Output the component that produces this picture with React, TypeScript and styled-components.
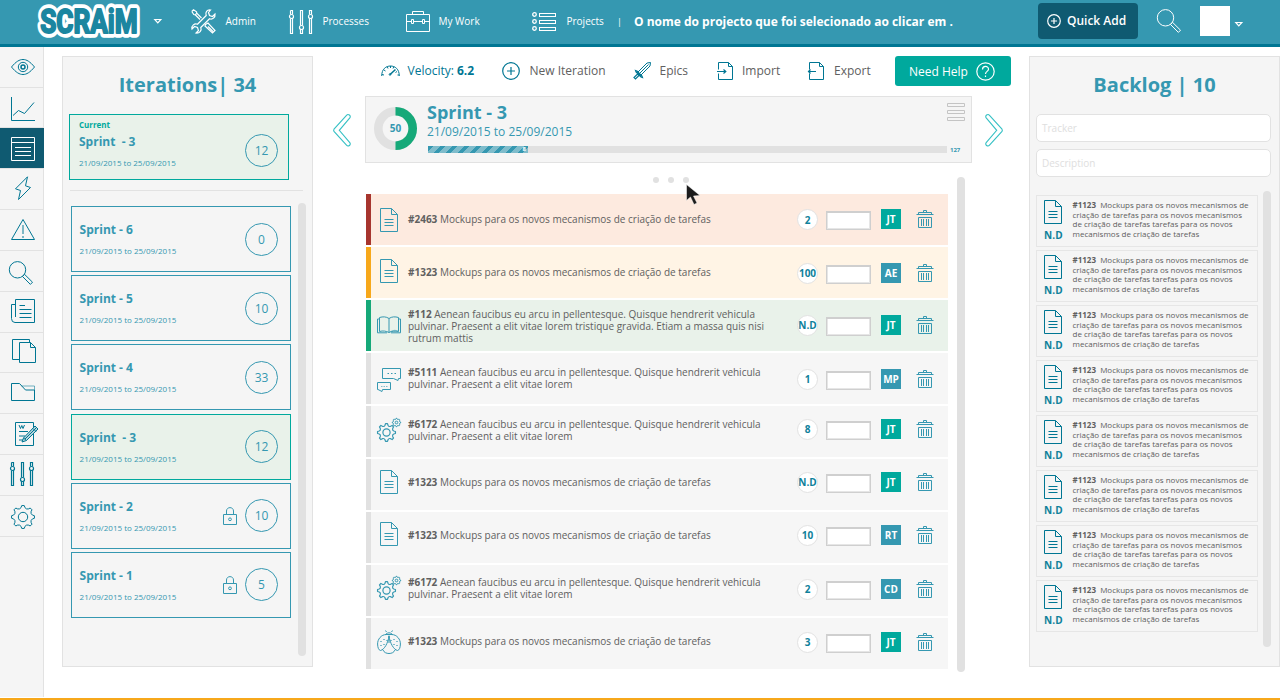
import React from "react";
import styled, { createGlobalStyle } from "styled-components";

const c = {
  blue: "#3598b1",
  deep: "#007693",
  navy: "#0f5a71",
  teal: "#00a99d",
  green: "#16a979",
  mint: "#e9f2ea",
  panel: "#f5f5f5",
  line: "#e2e2e2",
  text: "#606060",
  orange: "#f7a81b",
};

const Global = createGlobalStyle`
  *, *::before, *::after { box-sizing: border-box; }
  html, body { margin: 0; padding: 0; background: #fff; }
  body { font-family: "Open Sans", "Liberation Sans", sans-serif; overflow: hidden; }
  svg { display: block; flex: none; }
`;

/* ---------- icons ---------- */

type IconProps = { w?: number; h?: number; color?: string; sw?: number; children?: React.ReactNode };

const Icon = ({ w = 24, h = 24, color = c.deep, sw = 1, children }: IconProps) => (
  <svg width={w} height={h} viewBox={`0 0 ${w} ${h}`} fill="none" stroke={color} strokeWidth={sw} overflow="visible">
    {children}
  </svg>
);

const gearPath = (cx: number, cy: number, ro: number, ri: number, teeth = 8) => {
  const step = (Math.PI * 2) / teeth;
  const p = (r: number, a: number) => `${(cx + r * Math.sin(a)).toFixed(2)} ${(cy - r * Math.cos(a)).toFixed(2)}`;
  let d = "";
  for (let i = 0; i < teeth; i++) {
    const a = i * step;
    d += `${i ? "L" : "M"}${p(ri + 0.6, a - step * 0.26)}L${p(ro, a - step * 0.14)}L${p(ro, a + step * 0.14)}L${p(ri + 0.6, a + step * 0.26)}`;
    d += `Q${p(ri - 0.8, a + step * 0.5)} ${p(ri + 0.6, a + step * 0.74)}`;
  }
  return d + "Z";
};

const EyeIcon = () => (
  <Icon>
    <path d="M.5 12C5 6.5 8.500 4.500 12 4.500S19 6.500 23.500 12C19 17.500 15.500 19.500 12 19.500S5 17.500 .5 12Z" />
    <circle cx="12" cy="12" r="4.700" />
    <circle cx="12" cy="12" r="2" strokeWidth="1.500" />
  </Icon>
);
const ChartIcon = () => (
  <Icon>
    <path d="M.5 0V23.500H24M2 18.500L7.500 13.500L13.500 16.500L23 5.500" />
  </Icon>
);
const ListIcon = () => (
  <Icon color="#fff">
    <path d="M.5 .5H23.500V23.500H.5ZM.5 5.500H23.500M4 10.500H20M4 14.500H20M4 18.500H20" />
  </Icon>
);
const BoltIcon = () => (
  <Icon>
    <path d="M16.500 .8L4.500 12.800L9.500 14.500L7.500 23.500L19.500 11.500L14.500 9.800Z" />
  </Icon>
);
const WarnIcon = () => (
  <Icon>
    <path d="M12 1.500L23.500 21.500H.5Z" />
    <path d="M12 7V16M12 18V20" strokeWidth="1.500" opacity=".65" />
  </Icon>
);
const SearchIcon = ({ color = c.deep }: { color?: string }) => (
  <Icon color={color}>
    <circle cx="8.500" cy="8.800" r="8.200" />
    <path d="M13.500 15.500L15.600 13.400L23.500 21.200L21.400 23.400ZM14 14L14.800 14.800" />
  </Icon>
);
const NewsIcon = () => (
  <Icon>
    <path d="M4.500 18V.5H23.500V23.500H4Q.5 23.500 .5 19.500V5.500H4.500M8.500 6.500H14M8.500 10.500H20.500M8.500 14.500H20.500M8.500 18.500H20.500" />
  </Icon>
);
const CopyIcon = () => (
  <Icon>
    <path d="M7 20.500H.5V.5H17.500V3.500M7.500 3.500H18.500L23.500 8.500V23.500H7.500ZM18.500 3.500V8.500H23.500" />
  </Icon>
);
const FolderIcon = () => (
  <Icon>
    <path d="M.5 3.500H8.500L14.500 10H23.500V20.500H.5Z" />
    <path d="M10.500 6H23.500V10" opacity=".55" />
  </Icon>
);
const WordIcon = () => (
  <Icon>
    <path d="M.5 .5H18.500V23.500H.5ZM4 9.500H13M4 14H10M4 18H8.500" />
    <path d="M4 3L5.500 6.500L6.800 3.500L8 6.500L9.500 3" />
    <path d="M7 20L8.500 16L20 4L23 7L11.500 18.500Z" fill="#b5d4dc" />
    <path d="M8.500 16L11.500 18.500M10 17L21.500 5.500M18 6.500L21 9.500" />
  </Icon>
);
const SlidersIcon = ({ color = c.deep }: { color?: string }) => (
  <Icon color={color} sw={1.2}>
    <path d="M1.500 .5H3.500V4.500M1.500 .5V4.500M1.500 8.500V23.500H3.500V8.500M11.500 15.500V.5H13.500V15.500M11.500 19.500V23.500H13.500V19.500M20.500 4.500V.5H22.500V4.500M20.500 8.500V23.500H22.500V8.500" />
    <circle cx="2.500" cy="6.500" r="2" />
    <circle cx="12.500" cy="17.500" r="2" />
    <circle cx="21.500" cy="6.500" r="2" />
  </Icon>
);
const GearIcon = () => (
  <Icon>
    <path d={gearPath(12, 12, 11.5, 9)} strokeLinejoin="round" />
    <circle cx="12" cy="12" r="4.700" />
  </Icon>
);
const GearsIcon = () => (
  <Icon color={c.blue}>
    <path d={gearPath(9.5, 14.500, 9, 6.800)} strokeLinejoin="round" strokeWidth="1.200" />
    <circle cx="9.500" cy="14.500" r="3.600" strokeWidth="1.200" />
    <path d={gearPath(19.500, 4.500, 4.200, 3.200)} strokeLinejoin="round" />
    <circle cx="19.500" cy="4.500" r="1.300" />
  </Icon>
);
const ToolsIcon = () => (
  <Icon color="#fff" w={25} h={25} sw={1.2}>
    <path d="M.8 2.500L2.500 .8L5.500 2.800L5.800 4.200L10.500 9M4.200 5.800L9 10.500M.8 2.500L2.800 5.500L4.200 5.800L5.800 4.200" />
    <path d="M14.500 15.500L17 14L24 21.500L21.500 24L14 17ZM17 17.500L22 22.500" />
    <path d="M19.500 1C16 .5 14 3.500 15.200 6.500L6.500 15.200C3.500 14 .3 16.500 1 20L3.500 17.500L6.500 18.500L7.500 21.500L5 24C8.500 24.500 11 21.500 9.800 18.500L18.500 9.800C21.500 11 24.500 8.500 24 5L21.500 7.500L18.500 6.500L17.500 3.500Z" />
  </Icon>
);
const CaseIcon = () => (
  <Icon color="#fff" h={21}>
    <path d="M.5 3.500H23.500V20.500H.5ZM6.500 3V.5H17.500V3M.5 10.500H5M8 10.500H16M19 10.500H23.500M5.500 8.500H7.500V12.500H5.500ZM16.500 8.500H18.500V12.500H16.500Z" />
  </Icon>
);
const ProjectsIcon = () => (
  <Icon color="#fff" h={20} w={25}>
    {[2.5, 9.5, 16.5].map((y) => (
      <g key={y}>
        <circle cx="2.500" cy={y} r="1.800" strokeWidth="1.300" />
        <rect x="7.500" y={y - 1} width="16" height="3" />
      </g>
    ))}
  </Icon>
);
const Caret = () => (
  <Icon color="#fff" w={8} h={5} sw={1.2}>
    <path d="M.8 .5H6.800L3.800 3.800Z" />
  </Icon>
);
const PlusIcon = ({ size, color }: { size: number; color: string }) => (
  <Icon w={size} h={size} color={color} sw={1.2}>
    <circle cx={size / 2} cy={size / 2} r={size / 2 - 0.7} />
    <path d={`M${size / 2} ${size * 0.28}V${size * 0.72}M${size * 0.28} ${size / 2}H${size * 0.72}`} />
  </Icon>
);
const GaugeIcon = () => (
  <Icon w={19} h={12}>
    <path d="M.7 11C.7 4 5 1 9.500 1S18.300 4 18.300 11M1 9.500L3 10M3 5L4.500 6M6.300 1.800L7 3.500M9.500 1V3M12.800 1.800L12 3.500" />
    <path d="M9 9.500L14.500 4.500" strokeWidth="1.600" />
    <circle cx="9" cy="9.500" r=".8" />
    <path d="M16 6.500L14.500 7.500M18 10H16.500" />
  </Icon>
);
const SwordIcon = () => (
  <Icon w={18} h={18}>
    <path d="M17.500 .5L17 4L7.500 13.500L4.500 10.500L14 1ZM15.500 2.500L6 12" />
    <path d="M2.500 8.500L4 9L9 14L9.500 15.500L8 15L3 10ZM4.500 12L6 13.500L2.500 17L1 15.500Z" strokeWidth="1.200" />
  </Icon>
);
const TransferIcon = ({ out }: { out?: boolean }) => (
  <Icon w={16} h={18}>
    <path d="M1.500 7.500V.5H11.500L15.500 4.500V17.500H1.500V11.500M11.500 .5V4.500H15.500" />
    {out ? <path d="M.5 9.500H8M2.500 7.500L.5 9.500L2.500 11.500" strokeWidth="1.200" /> : <path d="M0 9.500H9M6.500 7.500L8.800 9.500L6.500 11.500" strokeWidth="1.200" />}
  </Icon>
);
const HelpIcon = () => (
  <Icon w={19} h={19} color="#fff" sw={1.2}>
    <circle cx="9.500" cy="9.500" r="8.700" />
    <path d="M6.500 7.500C6.500 3.500 12.500 3.500 12.500 7.200C12.500 9.500 9.500 9.300 9.500 12M9.500 13.500V15" />
  </Icon>
);
const Chevron = ({ flip }: { flip?: boolean }) => (
  <Icon w={18} h={33} color="#35c0c4" sw={1.1}>
    <g transform={flip ? "translate(18 0) scale(-1 1)" : undefined}>
      <path d="M13.500 1.300L1 15.200Q.3 16.300 1 17.400L13.500 31.200C15.200 33.200 18.500 30.800 16.800 28.600L6.300 16.300L16.800 3.900C18.500 1.700 15.200 -.6 13.500 1.300Z" />
    </g>
  </Icon>
);
const DocIcon = ({ color = c.blue }: { color?: string }) => (
  <Icon w={18} color={color}>
    <path d="M.5 .5H11.500L17.500 6.500V23.500H.5ZM11.500 .5V6.500H17.500M4.500 11.500H13.500M4.500 14.500H13.500M4.500 17.500H13.500" />
  </Icon>
);
const BookIcon = () => (
  <Icon color={c.blue} h={18}>
    <path d="M12 2.500C9 .5 6 .5 2.500 1.500V15.500C6 14.500 9 15 12 16.500C15 15 18 14.500 21.500 15.500V1.500C18 .5 15 .5 12 2.500V16.500M2.500 3H.5V16.800H10M21.500 3H23.500V16.800H14" />
    <path d="M12.500 16C15 13.500 18 13 21 14.500V16Z" fill={c.blue} opacity=".4" stroke="none" />
  </Icon>
);
const ChatIcon = () => (
  <Icon color={c.blue}>
    <path d="M5.500 .5H23.500V10.500H21.500L21 12.500L16.500 10.500H5.500ZM.5 14.500H13.500V21.500H5.500L5 23.500L1 21.500H.5Z" />
    <path d="M10.500 5.500H19" strokeDasharray="1.500 2" />
    <path d="M4 18.500H10.500" strokeDasharray="1.500 1" opacity=".6" />
  </Icon>
);
const BugIcon = () => (
  <Icon color={c.blue}>
    <path d="M9.500 4.500C4 4.500 .5 9.500 .6 14C.7 17.500 1.500 20 3.500 20.500C7.500 19.500 11 13 12 6C13 13 16.500 19.500 20.500 20.500C22.500 20 23.300 17.500 23.400 14C23.500 9.500 20 4.500 14.500 4.500" />
    <path d="M6 20C7 22.500 9.500 23.500 12 23.500S17 22.500 18 20M8.500 4.500Q12 1 15.500 4.500ZM12 5.500V13" />
    <path d="M9.500 2L8.500 .5M14.500 2L15.500 .5" />
    <path d="M4 11V12M7 9V10M4 15V16M7 14V15M10 10V11M20 11V12M17 9V10M20 15V16M17 14V15M14 10V11" strokeWidth="1.200" />
  </Icon>
);
const TrashIcon = () => (
  <Icon w={18} h={19} color={c.blue}>
    <path d="M7.500 2.500V.5H10.500V2.500M2.500 4V2.500H15.500V4M.5 4.500H17.500M2.500 7.500H15.500V17.500H2.500ZM5.500 9V16M7.500 9V16M10.500 9V16M12.500 9V16" />
  </Icon>
);
const LockIcon = () => (
  <Icon w={14} h={18} color={c.blue}>
    <path d="M.5 7.500H13.500V17.500H.5ZM3.500 7.500V4C3.500 -.5 10.500 -.5 10.500 4V7.500" />
    <circle cx="7" cy="12.300" r="1.400" />
  </Icon>
);

/* ---------- header ---------- */

const Page = styled.div`
  width: 1280px;
  height: 700px;
  display: flex;
  flex-direction: column;
  border-bottom: 2px solid ${c.orange};
  background: #fff;
`;
const Header = styled.header`
  flex: none;
  height: 47px;
  display: flex;
  align-items: flex-start;
  background: ${c.blue};
  border-bottom: 3px solid ${c.deep};
  color: #fff;
`;
const Brand = styled.div`
  display: flex;
  align-items: center;
  gap: 13px;
  width: 191px;
  height: 42px;
  padding-left: 36px;
`;
const LogoText = styled.text`
  font-family: Roboto, "Open Sans", sans-serif;
  font-weight: 700;
  font-size: 34px;
`;
const NavItem = styled.a<{ $w: number; $gap: number }>`
  display: flex;
  align-items: center;
  gap: ${(p) => p.$gap}px;
  width: ${(p) => p.$w}px;
  height: 43px;
  font-size: 10px;
  font-weight: 500;
  white-space: nowrap;
`;
const NavLabel = styled.span`
  padding-bottom: 1px;
`;
const ProjectName = styled.div`
  display: flex;
  align-items: center;
  width: 420px;
  height: 43px;
  font-size: 12px;
  font-weight: 700;
  white-space: nowrap;
`;
const Bar = styled.span`
  width: 17px;
  margin-left: -1px;
  font-size: 9px;
  font-weight: 500;
`;
const QuickAdd = styled.button`
  display: flex;
  align-items: center;
  gap: 6px;
  width: 100px;
  height: 36px;
  margin-top: 3px;
  padding: 0 0 0 9px;
  border: 0;
  border-radius: 4px;
  background: ${c.navy};
  color: #fff;
  font: 600 12px "Open Sans", sans-serif;
  white-space: nowrap;
`;
const QuickLabel = styled.span`
  padding-bottom: 1px;
`;
const HeaderSearch = styled.div`
  margin: 9px 19px 0 19px;
`;
const Avatar = styled.div`
  width: 30px;
  height: 30px;
  margin: 6px 5px 0 0;
  background: #fff;
`;
const UserCaret = styled.div`
  margin-top: 22px;
`;

/* ---------- layout ---------- */

const Body = styled.div`
  flex: 1;
  min-height: 0;
  display: flex;
  align-items: flex-start;
`;
const Rail = styled.nav`
  width: 44px;
  height: 650px;
  border-right: 1px solid ${c.line};
  background: ${c.panel};
  display: flex;
  flex-direction: column;
`;
const RailItem = styled.div<{ $active?: boolean; $h: number; $x?: number; $y?: number }>`
  flex: none;
  width: ${(p) => (p.$active ? 44 : 43)}px;
  height: ${(p) => p.$h}px;
  padding: ${(p) => p.$y ?? 8}px 0 0 ${(p) => p.$x ?? 11}px;
  border-bottom: 1px solid ${c.line};
  background: ${(p) => (p.$active ? c.navy : "transparent")};
  background-clip: padding-box;
`;
const Panel = styled.aside`
  flex: none;
  width: 251px;
  height: 611px;
  margin-top: 9px;
  border: 1px solid ${c.line};
  background: ${c.panel};
`;
const IterationsPanel = styled(Panel)`
  margin-left: 18px;
`;
const PanelTitle = styled.h2`
  margin: 0;
  height: 57px;
  line-height: 56px;
  text-align: center;
  font-size: 20px;
  font-weight: 700;
  color: ${c.blue};
  white-space: pre;
`;
const Scroll = styled.div<{ $h: number; $mt?: number; $ml?: number }>`
  flex: none;
  width: 8px;
  height: ${(p) => p.$h}px;
  margin: ${(p) => p.$mt ?? 0}px 0 0 ${(p) => p.$ml ?? 0}px;
  border-radius: 4px;
  background: #e1e1e1;
`;

/* ---------- iterations ---------- */

const Split = styled.div`
  display: flex;
  align-items: flex-start;
`;
const CurrentWrap = styled.div`
  margin-left: 6px;
  padding-bottom: 10px;
`;
const Divider = styled.div`
  height: 1px;
  margin: 0 9px 0 7px;
  background: ${c.line};
`;
const SprintStack = styled.div`
  display: flex;
  flex-direction: column;
  gap: 3.200px;
  margin: 15px 7px 0 8px;
`;
const SprintCard = styled.div<{ $on?: boolean; $pad?: number }>`
  width: 220px;
  height: 66px;
  display: flex;
  align-items: center;
  padding: 0 ${(p) => (p.$pad ? 10 : 12)}px 0 ${(p) => p.$pad ?? 7.600}px;
  border: 1px solid ${(p) => (p.$on ? c.teal : c.blue)};
  background: ${(p) => (p.$on ? c.mint : "transparent")};
  color: ${c.blue};
`;
const SprintInfo = styled.div<{ $current?: boolean }>`
  flex: 1;
  height: 64px;
  padding-top: ${(p) => (p.$current ? 4 : 15)}px;
`;
const CurrentTag = styled.div`
  height: 15px;
  font-size: 8px;
  line-height: 11px;
  font-weight: 700;
  color: ${c.teal};
`;
const SprintName = styled.div`
  font-size: 12px;
  line-height: 16px;
  height: 21px;
  font-weight: 700;
  white-space: pre;
`;
const SprintDates = styled.div`
  font-size: 8px;
  line-height: 15px;
  font-weight: 500;
  white-space: nowrap;
`;
const CountRing = styled.div<{ $dy?: number }>`
  display: flex;
  align-items: center;
  justify-content: center;
  width: 33px;
  height: 33px;
  margin-left: 8px;
  margin-top: ${(p) => p.$dy ?? 0}px;
  border: 1px solid ${c.blue};
  border-radius: 50%;
  font-size: 12px;
`;

/* ---------- center ---------- */

const Main = styled.main`
  flex: none;
  width: 716px;
  display: flex;
  flex-direction: column;
`;
const Toolbar = styled.div`
  display: flex;
  align-items: center;
  height: 30px;
  margin: 9px 0 10px 68px;
`;
const Tool = styled.a<{ $w: number; $gap: number; $accent?: boolean }>`
  display: flex;
  align-items: center;
  gap: ${(p) => p.$gap}px;
  width: ${(p) => p.$w}px;
  font-size: 12px;
  line-height: 28px;
  color: ${(p) => (p.$accent ? c.deep : c.text)};
  white-space: pre;
`;
const HelpButton = styled.button`
  display: flex;
  align-items: center;
  gap: 8px;
  width: 116px;
  height: 30px;
  padding: 0 0 0 14px;
  border: 0;
  border-radius: 3px;
  background: ${c.teal};
  color: #fff;
  font: 500 12px "Open Sans", sans-serif;
  white-space: nowrap;
`;
const SprintHead = styled.div`
  display: flex;
  align-items: center;
  gap: 14px;
  padding-left: 20px;
`;
const ArrowWrap = styled.div<{ $next?: boolean }>`
  padding-top: 1px;
  margin-left: ${(p) => (p.$next ? -1 : 0)}px;
`;
const SprintBox = styled.section`
  display: flex;
  width: 607px;
  height: 67px;
  border: 1px solid ${c.line};
  background: ${c.panel};
  padding: 0 7px 0 8px;
`;
const Donut = styled.div`
  width: 44px;
  padding-top: 10px;
`;
const DonutLabel = styled.text`
  font: 700 10px "Open Sans", sans-serif;
  fill: ${c.blue};
`;
const SprintDetail = styled.div`
  flex: 1;
  padding: 3px 0 0 9px;
  color: ${c.blue};
`;
const SprintTitle = styled.h1`
  margin: 0;
  font-size: 18px;
  line-height: 24px;
  font-weight: 700;
`;
const SprintRange = styled.div`
  font-size: 12px;
  line-height: 15px;
`;
const ProgressRow = styled.div`
  display: flex;
  align-items: center;
  gap: 3px;
  margin: 7px 0 0 1px;
  height: 7px;
  font-size: 6px;
  font-weight: 700;
`;
const Track = styled.div`
  width: 519px;
  height: 7px;
  background: #e1e1e1;
`;
const Fill = styled.div`
  width: 100px;
  height: 7px;
  padding-right: 2px;
  text-align: right;
  line-height: 7px;
  font-size: 6px;
  color: #fff;
  background: repeating-linear-gradient(135deg, ${c.blue} 0 4px, #7fbccb 4px 8.500px);
`;
const MenuWrap = styled.div`
  width: 18px;
  padding-top: 6px;
  margin: 0 -1px 0 -17px;
`;
const Dots = styled.div`
  display: flex;
  gap: 9px;
  height: 14px;
  margin: 14px 0 0 287.500px;
`;
const Dot = styled.i`
  width: 6px;
  height: 6px;
  border-radius: 50%;
  background: #e1e1e1;
`;
const Cursor = styled.div`
  position: absolute;
  left: 686px;
  top: 184px;
`;
const ListArea = styled.div`
  display: flex;
  align-items: flex-start;
  margin-left: 52px;
`;
const TaskList = styled.div`
  width: 583px;
  display: flex;
  flex-direction: column;
  gap: 2px;
  padding-top: 3px;
`;
const TaskRow = styled.article<{ $bg: string; $bar: string }>`
  display: flex;
  align-items: flex-start;
  width: 582px;
  height: 50.960px;
  margin-left: 1px;
  border-left: 5px solid ${(p) => p.$bar};
  background: ${(p) => p.$bg};
`;
const TaskIcon = styled.div<{ $y: number }>`
  display: flex;
  justify-content: center;
  width: 24px;
  margin: ${(p) => p.$y}px 7px 0 6px;
`;
const TaskText = styled.p<{ $y: number }>`
  width: 389px;
  margin: ${(p) => p.$y - 1}px 0 0;
  padding-right: 28px;
  font-size: 10px;
  line-height: 12px;
  font-weight: 500;
  color: ${c.text};
`;
const Controls = styled.div<{ $y: number }>`
  display: flex;
  align-items: flex-start;
  margin-top: ${(p) => p.$y}px;
`;
const Points = styled.div`
  display: flex;
  align-items: center;
  justify-content: center;
  width: 21px;
  height: 21px;
  border: 1px solid ${c.line};
  border-radius: 50%;
  background: #fff;
  color: #10819b;
  font-size: 10px;
  font-weight: 700;
  white-space: nowrap;
`;
const Effort = styled.div`
  width: 45px;
  height: 19px;
  margin: 2px 10px 0 8px;
  border: 1px solid #cfcfcf;
  border-top-width: 2px;
  box-shadow: inset 1px 0 0 #e6e6e6, inset -1px -1px 0 #e6e6e6;
  background: #fff;
`;
const Owner = styled.div<{ $teal?: boolean }>`
  width: 20px;
  height: 20px;
  margin-right: 15px;
  background: ${(p) => (p.$teal ? c.teal : c.blue)};
  color: #fff;
  font-size: 10px;
  line-height: 20px;
  font-weight: 700;
  text-align: center;
`;
const TrashWrap = styled.div`
  padding-top: 1px;
`;

/* ---------- backlog ---------- */

const Field = styled.div`
  width: 235px;
  height: 28px;
  margin: 0 0 7px 6px;
  padding-left: 5px;
  border: 1px solid ${c.line};
  border-radius: 5px;
  background: #fff;
  color: #dedede;
  font-size: 10px;
  line-height: 26px;
`;
const BacklogStack = styled.div`
  display: flex;
  flex-direction: column;
  gap: 3px;
  margin: 11px 5px 0 6px;
`;
const BacklogCard = styled.div`
  display: flex;
  width: 222px;
  height: 52px;
  padding: 4px 0 0 7px;
  border: 1px solid #e6e6e6;
`;
const BacklogSide = styled.div`
  width: 28.500px;
  color: #10819b;
  font-size: 10px;
  line-height: 22px;
  font-weight: 700;
  letter-spacing: 0.1px;
`;
const BacklogText = styled.p`
  margin: 0;
  font-size: 8px;
  line-height: 9.700px;
  font-weight: 500;
  color: ${c.text};
  white-space: pre;
`;

/* ---------- data ---------- */

const sprints = [
  { name: "Sprint - 6", n: 0 },
  { name: "Sprint - 5", n: 10 },
  { name: "Sprint - 4", n: 33 },
  { name: "Sprint  - 3", n: 12, on: true },
  { name: "Sprint - 2", n: 10, locked: true },
  { name: "Sprint - 1", n: 5, locked: true },
];
const range = "21/09/2015 to 25/09/2015";
const mock = "Mockups para os novos mecanismos de criação de tarefas";
const lorem = "Aenean faucibus eu arcu in pellentesque. Quisque hendrerit vehicula pulvinar. Praesent a elit vitae lorem";
const gray = { bg: "#f6f6f6", bar: "#e1e1e1" };

const tasks = [
  { id: "#2463", text: mock, icon: <DocIcon />, pts: "2", who: "JT", bg: "#fdeadf", bar: "#a7352e", iy: 14, ty: 20, cy: 15 },
  { id: "#1323", text: mock, icon: <DocIcon />, pts: "100", who: "AE", bg: "#fff4e5", bar: c.orange, iy: 12, ty: 20, cy: 16 },
  { id: "#112", text: lorem + " tristique gravida. Etiam a massa quis nisi rutrum mattis", icon: <BookIcon />, pts: "N.D", who: "JT", bg: c.mint, bar: c.green, iy: 16, ty: 9, cy: 15 },
  { id: "#5111", text: lorem, icon: <ChatIcon />, pts: "1", who: "MP", ...gray, iy: 15, ty: 14, cy: 16 },
  { id: "#6172", text: lorem, icon: <GearsIcon />, pts: "8", who: "JT", ...gray, iy: 12, ty: 13, cy: 13 },
  { id: "#1323", text: mock, icon: <DocIcon />, pts: "N.D", who: "JT", ...gray, iy: 11, ty: 18, cy: 13 },
  { id: "#1323", text: mock, icon: <DocIcon />, pts: "10", who: "RT", ...gray, iy: 10, ty: 18, cy: 13 },
  { id: "#6172", text: lorem, icon: <GearsIcon />, pts: "2", who: "CD", ...gray, iy: 11, ty: 12, cy: 14 },
  { id: "#1323", text: mock, icon: <BugIcon />, pts: "3", who: "JT", ...gray, iy: 12, ty: 18, cy: 14 },
];

export default function App() {
  return (
    <Page>
      <Global />
      <Header>
        <Brand>
          <svg width="105" height="36" viewBox="0 0 105 36" overflow="visible">
            <g strokeLinejoin="round">
              <LogoText x="4.200" y="30" textLength="97.500" lengthAdjust="spacingAndGlyphs" stroke="#fff" strokeWidth="9.500" fill="#fff">
                SCRAiM
              </LogoText>
              <LogoText x="4.200" y="30" textLength="97.500" lengthAdjust="spacingAndGlyphs" stroke="#1b86a0" strokeWidth="2" fill="#1b86a0">
                SCRAiM
              </LogoText>
            </g>
          </svg>
          <Caret />
        </Brand>
        <NavItem $w={98} $gap={9.5}><ToolsIcon /><NavLabel>Admin</NavLabel></NavItem>
        <NavItem $w={117} $gap={9.5}><SlidersIcon color="#fff" /><NavLabel>Processes</NavLabel></NavItem>
        <NavItem $w={126} $gap={8.5}><CaseIcon /><NavLabel>My Work</NavLabel></NavItem>
        <NavItem $w={86} $gap={9.5}><ProjectsIcon /><NavLabel>Projects</NavLabel></NavItem>
        <ProjectName><Bar>|</Bar>O nome do projecto que foi selecionado ao clicar em .</ProjectName>
        <QuickAdd><PlusIcon size={14} color="#fff" /><QuickLabel>Quick Add</QuickLabel></QuickAdd>
        <HeaderSearch><SearchIcon color="#fff" /></HeaderSearch>
        <Avatar />
        <UserCaret><Caret /></UserCaret>
      </Header>

      <Body>
        <Rail>
          <RailItem $h={41}><EyeIcon /></RailItem>
          <RailItem $h={40} $y={9}><ChartIcon /></RailItem>
          <RailItem $active $h={41} $y={9}><ListIcon /></RailItem>
          <RailItem $h={41} $y={7}><BoltIcon /></RailItem>
          <RailItem $h={41} $y={8}><WarnIcon /></RailItem>
          <RailItem $h={41} $y={10} $x={9}><SearchIcon /></RailItem>
          <RailItem $h={41} $y={7}><NewsIcon /></RailItem>
          <RailItem $h={40} $y={6} $x={12}><CopyIcon /></RailItem>
          <RailItem $h={41} $y={7}><FolderIcon /></RailItem>
          <RailItem $h={41} $y={8} $x={15}><WordIcon /></RailItem>
          <RailItem $h={41} $y={7} $x={10}><SlidersIcon /></RailItem>
          <RailItem $h={41} $y={9}><GearIcon /></RailItem>
        </Rail>

        <IterationsPanel>
          <PanelTitle>Iterations| 34</PanelTitle>
          <CurrentWrap>
            <SprintCard $on $pad={9}>
              <SprintInfo $current>
                <CurrentTag>Current</CurrentTag>
                <SprintName>Sprint  - 3</SprintName>
                <SprintDates>{range}</SprintDates>
              </SprintInfo>
              <CountRing $dy={7}>12</CountRing>
            </SprintCard>
          </CurrentWrap>
          <Divider />
          <Split>
            <SprintStack>
              {sprints.map((s) => (
                <SprintCard key={s.name} $on={s.on}>
                  <SprintInfo>
                    <SprintName>{s.name}</SprintName>
                    <SprintDates>{range}</SprintDates>
                  </SprintInfo>
                  {s.locked && <LockIcon />}
                  <CountRing>{s.n}</CountRing>
                </SprintCard>
              ))}
            </SprintStack>
            <Scroll $h={453} $mt={12} />
          </Split>
        </IterationsPanel>

        <Main>
          <Toolbar>
            <Tool $w={121} $gap={7.5} $accent><GaugeIcon /><span>Velocity: <b>6.2</b></span></Tool>
            <Tool $w={131} $gap={9.5}><PlusIcon size={18} color={c.deep} />New Iteration</Tool>
            <Tool $w={84} $gap={8.5}><SwordIcon />Epics</Tool>
            <Tool $w={91} $gap={9}><TransferIcon />Import</Tool>
            <Tool $w={87} $gap={10}><TransferIcon out />Export</Tool>
            <HelpButton>Need Help<HelpIcon /></HelpButton>
          </Toolbar>
          <SprintHead>
            <ArrowWrap><Chevron /></ArrowWrap>
            <SprintBox>
              <Donut>
                <svg width="44" height="44" viewBox="0 0 44 44">
                  <circle cx="21.500" cy="21.500" r="17.200" fill="none" stroke="#e1e1e1" strokeWidth="8.600" />
                  <path d="M21.500 4.300A17.200 17.200 0 0 1 21.500 38.700" fill="none" stroke={c.green} strokeWidth="8.600" />
                  <DonutLabel x="21.500" y="25" textAnchor="middle">50</DonutLabel>
                </svg>
              </Donut>
              <SprintDetail>
                <SprintTitle>Sprint - 3</SprintTitle>
                <SprintRange>{range}</SprintRange>
                <ProgressRow><Track><Fill>8</Fill></Track>127</ProgressRow>
              </SprintDetail>
              <MenuWrap>
                <Icon w={18} h={19} color="#c4c4c4">
                  <path d="M.5 .5H17.500V3.500H.5ZM.5 7.500H17.500V10.500H.5ZM.5 14.500H17.500V17.500H.5Z" />
                </Icon>
              </MenuWrap>
            </SprintBox>
            <ArrowWrap $next><Chevron flip /></ArrowWrap>
          </SprintHead>
          <ListArea>
            <div>
              <Dots><Dot /><Dot /><Dot /></Dots>
              <TaskList>
                {tasks.map((t, i) => (
                  <TaskRow key={i} $bg={t.bg} $bar={t.bar}>
                    <TaskIcon $y={t.iy}>{t.icon}</TaskIcon>
                    <TaskText $y={t.ty}><b>{t.id}</b> {t.text}</TaskText>
                    <Controls $y={t.cy}>
                      <Points>{t.pts}</Points>
                      <Effort />
                      <Owner $teal={t.who === "JT"}>{t.who}</Owner>
                      <TrashWrap><TrashIcon /></TrashWrap>
                    </Controls>
                  </TaskRow>
                ))}
              </TaskList>
            </div>
            <Scroll $h={495} $mt={14} $ml={9} />
          </ListArea>
        </Main>

        <Panel>
          <PanelTitle>Backlog | 10</PanelTitle>
          <Field>Tracker</Field>
          <Field>Description</Field>
          <Split>
            <BacklogStack>
              {Array.from({ length: 8 }, (_, i) => (
                <BacklogCard key={i}>
                  <BacklogSide><DocIcon color={c.deep} />N.D</BacklogSide>
                  <BacklogText>
                    <b>#1123</b>{"  Mockups para os novos mecanismos de\ncriação de tarefas para os novos mecanismos\nde criação de tarefas tarefas para os novos\nmecanismos de criação de tarefas"}
                  </BacklogText>
                </BacklogCard>
              ))}
            </BacklogStack>
            <Scroll $h={456} $mt={7} />
          </Split>
        </Panel>
      </Body>
      <Cursor>
        <svg width="15" height="21" viewBox="0 0 15 21">
          <path d="M.5 .5V16.500L4.500 13L8 20.500L11 19L7.500 12L14 11.500Z" fill="#1c1c1c" stroke="#fff" strokeWidth=".5" />
        </svg>
      </Cursor>
    </Page>
  );
}
